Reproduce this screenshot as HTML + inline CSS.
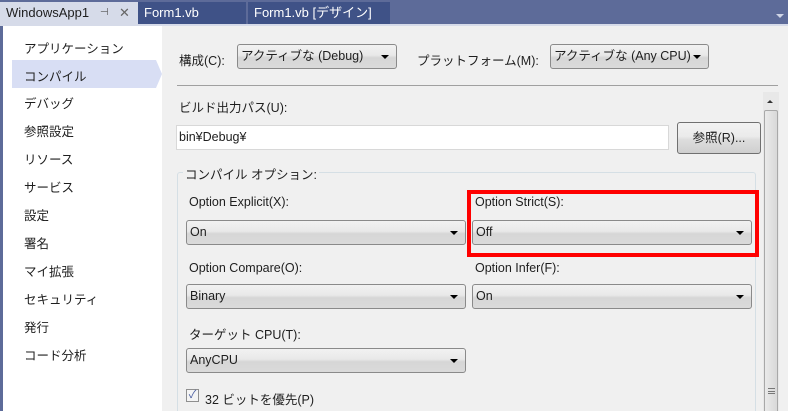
<!DOCTYPE html>
<html><head><meta charset="utf-8"><style>
*{box-sizing:border-box;margin:0;padding:0}
html{width:788px;height:411px;overflow:hidden}
body{width:788px;height:411px;overflow:hidden;background:#5d6b99;font-family:"Liberation Sans","Noto Sans CJK JP",sans-serif;font-size:12.5px;color:#1e1e1e;position:relative}
.a{position:absolute}
.tab{position:absolute;top:2px;height:24px;color:#fff;line-height:22px;padding-left:6px;font-size:13px}
.dd{position:absolute;height:25px;border:1px solid #8a8a8a;border-radius:3px;background:linear-gradient(#f2f2f2,#e8e8e8 45%,#d6d6d6 55%,#dadada);line-height:23px;padding-left:3px;font-size:12.5px;white-space:nowrap;overflow:hidden}
.dd:after{content:"";position:absolute;right:7px;top:10px;border-left:4px solid transparent;border-right:4px solid transparent;border-top:4px solid #000}
.nav{position:absolute;left:24px}
.lbl{position:absolute;white-space:nowrap}
</style></head><body>
<div class="tab" style="left:0;width:138px;background:#d6dbe9;color:#1e1e1e;height:24px">WindowsApp1<span style="position:absolute;left:100px;font-size:10px;color:#555">⊣</span><span style="position:absolute;left:119px;color:#666">✕</span></div>
<div class="tab" style="left:138px;width:108px;background:#3f5287">Form1.vb</div>
<div class="tab" style="left:248px;width:142px;background:#3f5287">Form1.vb [デザイン]</div>
<div class="a" style="left:0;top:24px;width:788px;height:2px;background:#d6dbe9"></div>
<div class="a" style="left:776px;top:14px;border-left:4px solid transparent;border-right:4px solid transparent;border-top:4px solid #cfd5e6"></div>
<div class="a" style="left:3px;top:26px;width:159px;height:385px;background:#fff"></div>
<div class="a" style="left:162px;top:26px;width:626px;height:385px;background:#f0f0f0;overflow:hidden"></div>
<div class="a" style="left:12px;top:60px;width:144px;height:28px;background:#d8def4"></div>
<div class="a" style="left:156px;top:60px;border-top:14px solid transparent;border-bottom:14px solid transparent;border-left:6px solid #d8def4"></div>
<div class="nav" style="top:38px">アプリケーション</div>
<div class="nav" style="top:66px">コンパイル</div>
<div class="nav" style="top:93px">デバッグ</div>
<div class="nav" style="top:121px">参照設定</div>
<div class="nav" style="top:149px">リソース</div>
<div class="nav" style="top:177px">サービス</div>
<div class="nav" style="top:205px">設定</div>
<div class="nav" style="top:233px">署名</div>
<div class="nav" style="top:261px">マイ拡張</div>
<div class="nav" style="top:289px">セキュリティ</div>
<div class="nav" style="top:317px">発行</div>
<div class="nav" style="top:345px">コード分析</div>

<div class="lbl" style="left:179px;top:50px">構成(C):</div>
<div class="dd" style="left:237px;top:44px;width:160px">アクティブな (Debug)</div>
<div class="lbl" style="left:417px;top:50px">プラットフォーム(M):</div>
<div class="dd" style="left:550px;top:44px;width:159px;padding-right:18px">アクティブな (Any CPU)</div>
<div class="a" style="left:177px;top:85px;width:601px;height:1px;background:#a0a0a0"></div>
<div class="lbl" style="left:179px;top:97px">ビルド出力パス(U):</div>
<div class="a" style="left:176px;top:125px;width:493px;height:25px;background:#fff;border:1px solid #d8d8d8;line-height:23px;padding-left:2px">bin¥Debug¥</div>
<div class="a" style="left:677px;top:122px;width:84px;height:32px;border:1px solid #707070;border-radius:3px;background:linear-gradient(#f2f2f2,#ebebeb 45%,#dddddd 55%,#cfcfcf);text-align:center;line-height:30px">参照(R)...</div>
<div class="a" style="left:177px;top:172px;width:579px;height:239px;border:1px solid #d5dfe5;border-bottom:none;border-radius:3px 3px 0 0"></div>
<div class="a" style="left:763px;top:92px;width:16px;height:319px;background:#e8e8e8"></div>
<div class="a" style="left:767px;top:100px;border-left:3px solid transparent;border-right:3px solid transparent;border-bottom:3px solid #333"></div>
<div class="a" style="left:764px;top:110px;width:14px;height:301px;border:1px solid #a8a8a8;border-bottom:none;border-radius:2px 2px 0 0;background:linear-gradient(90deg,#eaeaea,#d8d8d8)"></div>
<div class="a" style="left:768px;top:388px;width:7px;height:6px;border-top:1px solid #777;border-bottom:1px solid #777"><div style="margin-top:2px;height:1px;background:#777"></div></div>
<div class="lbl" style="left:183px;top:164px;background:#f0f0f0;padding:0 2px">コンパイル オプション:</div>
<div class="lbl" style="left:189px;top:195px">Option Explicit(X):</div>
<div class="dd" style="left:186px;top:220px;width:280px">On</div>
<div class="lbl" style="left:475px;top:195px">Option Strict(S):</div>
<div class="dd" style="left:472px;top:220px;width:280px">Off</div>
<div class="a" style="left:467px;top:190px;width:292px;height:67px;border:4px solid #f00"></div>
<div class="lbl" style="left:189px;top:261px">Option Compare(O):</div>
<div class="dd" style="left:186px;top:284px;width:280px">Binary</div>
<div class="lbl" style="left:475px;top:261px">Option Infer(F):</div>
<div class="dd" style="left:472px;top:284px;width:280px">On</div>
<div class="lbl" style="left:189px;top:324px">ターゲット CPU(T):</div>
<div class="dd" style="left:186px;top:348px;width:280px">AnyCPU</div>
<div class="a" style="left:186px;top:389px;width:13px;height:13px;border:1px solid #8f8f8f;background:#f4f4f4;color:#4a5da0;font-size:11px;line-height:11px;text-align:center">✓</div>
<div class="lbl" style="left:205px;top:389px">32 ビットを優先(P)</div>
</body></html>
